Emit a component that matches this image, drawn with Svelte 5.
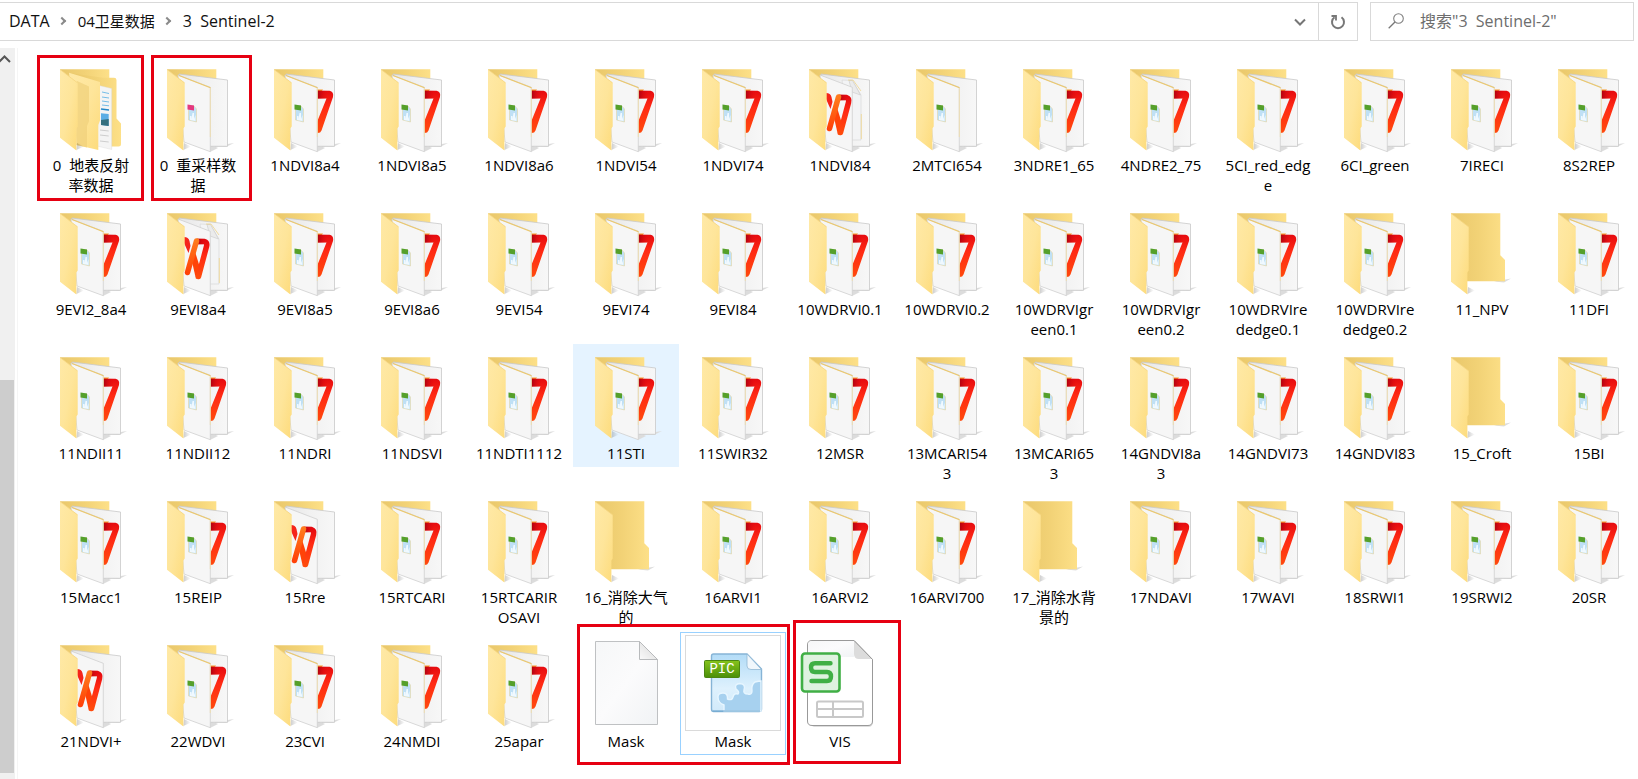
<script>
  // kind: data = green thumbnail with red mark behind, plain = empty folder
  const names = [
    ['0  地表反射\n率数据', 'nested'], ['0  重采样数\n据', 'pink'], '1NDVI8a4', '1NDVI8a5', '1NDVI8a6',
    '1NDVI54', '1NDVI74', ['1NDVI84', 'wdoc'], ['2MTCI654', 'green'], '3NDRE1_65',
    '4NDRE2_75', '5CI_red_edg\ne', '6CI_green', '7IRECI', '8S2REP',
    '9EVI2_8a4', ['9EVI8a4', 'wdoc'], '9EVI8a5', '9EVI8a6', '9EVI54',
    '9EVI74', '9EVI84', '10WDRVI0.1', '10WDRVI0.2', '10WDRVIgr\neen0.1',
    '10WDRVIgr\neen0.2', '10WDRVIre\ndedge0.1', '10WDRVIre\ndedge0.2', ['11_NPV', 'plain'], '11DFI',
    '11NDII11', '11NDII12', '11NDRI', '11NDSVI', '11NDTI1112',
    ['11STI', 'data', 'hover'], '11SWIR32', '12MSR', '13MCARI54\n3', '13MCARI65\n3',
    '14GNDVI8a\n3', '14GNDVI73', '14GNDVI83', ['15_Croft', 'plain'], '15BI',
    '15Macc1', '15REIP', ['15Rre', 'w'], '15RTCARI', '15RTCARIR\nOSAVI',
    ['16_消除大气\n的', 'plain'], '16ARVI1', '16ARVI2', '16ARVI700', ['17_消除水背\n景的', 'plain'],
    '17NDAVI', '17WAVI', '18SRWI1', '19SRWI2', '20SR',
    ['21NDVI+', 'w'], '22WDVI', '23CVI', '24NMDI', '25apar',
    ['Mask', 'blank'], ['Mask', 'pic', 'focus'], ['VIS', 'sheet'],
  ];
  const items = names.map((n) => {
    const [name, kind = 'data', state = ''] = Array.isArray(n) ? n : [n];
    return { name, kind, state };
  });
  const marks = ['m1', 'm2', 'm3', 'm4'];
</script>

<svg class="defs" aria-hidden="true">
  <defs>
    <linearGradient id="flap" x1="0" y1="0" x2="1" y2="1">
      <stop offset="0" stop-color="#ffe9a6" /><stop offset="0.5" stop-color="#fee59a" /><stop offset="1" stop-color="#fddb7b" />
    </linearGradient>
    <linearGradient id="back" x1="0" y1="0" x2="1" y2="0">
      <stop offset="0" stop-color="#e9c76a" /><stop offset="0.5" stop-color="#f2d276" /><stop offset="1" stop-color="#fde088" />
    </linearGradient>
    <linearGradient id="sheetRight" x1="0" y1="0" x2="1" y2="0">
      <stop offset="0" stop-color="#e6e6e6" /><stop offset="0.5" stop-color="#f1f1f1" /><stop offset="1" stop-color="#f7f7f7" />
    </linearGradient>
    <linearGradient id="red" x1="0" y1="0" x2="0" y2="1">
      <stop offset="0" stop-color="#e60b10" /><stop offset="0.4" stop-color="#ff2a14" /><stop offset="1" stop-color="#ff4a0c" />
    </linearGradient>
    <linearGradient id="dark" x1="0" y1="0" x2="1" y2="0">
      <stop offset="0" stop-color="#a80010" /><stop offset="1" stop-color="#e60b10" stop-opacity="0" />
    </linearGradient>
    <linearGradient id="orange" x1="0" y1="0" x2="0" y2="1">
      <stop offset="0" stop-color="#ff7a1c" /><stop offset="1" stop-color="#ff4208" />
    </linearGradient>
    <linearGradient id="shade" x1="0" y1="0" x2="1" y2="0">
      <stop offset="0" stop-color="#000" stop-opacity="0.2" /><stop offset="1" stop-color="#000" stop-opacity="0" />
    </linearGradient>
    <linearGradient id="page" x1="0" y1="0" x2="1" y2="1">
      <stop offset="0" stop-color="#f6f7f8" /><stop offset="0.5" stop-color="#fbfbfc" /><stop offset="1" stop-color="#f1f3f5" />
    </linearGradient>
    <linearGradient id="sky" x1="0" y1="0" x2="0" y2="1">
      <stop offset="0" stop-color="#b3dcf7" /><stop offset="0.6" stop-color="#def1fd" /><stop offset="1" stop-color="#d2eafa" />
    </linearGradient>
    <linearGradient id="leaf" x1="0" y1="0" x2="0" y2="1">
      <stop offset="0" stop-color="#86c41c" /><stop offset="1" stop-color="#4b8f08" />
    </linearGradient>
    <linearGradient id="fold" x1="0" y1="1" x2="1" y2="0">
      <stop offset="0" stop-color="#fafafa" /><stop offset="1" stop-color="#d6d6d6" />
    </linearGradient>
  </defs>
</svg>

{#snippet flap()}
  <path d="M33.4 91 41 87.500 34 84z" fill="url(#shade)" />
  <path d="M17 10.300 34.700 23.700V67.500L33.400 69.500V91.500L17 78.700z" fill="url(#flap)" />
  <path d="M17 10.500 34.500 23.800" stroke="#f3d27c" stroke-width=".7" fill="none" />
{/snippet}

{#snippet icon(kind)}
  <svg class="icon" viewBox="0 0 96 96" aria-hidden="true">
    {#if kind === 'plain'}
      <path d="M60 78.500 77 75.500 70 79.500z" fill="#ddd" />
      <path d="M17 10.300H66.300V52.300L71 57V78.300H30z" fill="url(#back)" />
      {@render flap()}
    {:else if kind === 'nested'}
      <path d="M17 10.300H66.300V40H30z" fill="url(#back)" />
      <path d="M27 14 60 18.700H71Q73.500 18.700 73.500 21V59.500L78 64.500V85Q78 87.500 75.500 87.500H60z" fill="url(#back)" />
      <path d="M56 26.500 68.700 29.500V90.500L54 87z" fill="#f4f4f4" stroke="#d8d8d8" stroke-width=".4" />
      <path d="M59 33 66 34.500M59 38 66 39M59 42 66 43M59 46 66 46.800" stroke="#54afe4" stroke-width=".8" />
      <path d="M58 50 66 51" stroke="#2187c8" stroke-width="1.300" />
      <path d="M58 54.300 65.700 55V67L58 66z" fill="#5caee5" /><path d="M58 61 65.700 60V67L58 66z" fill="#35707f" />
      <path d="M57 71 65.700 72M57 76 65.700 77M57 82 65.700 83" stroke="#bbb" stroke-width=".7" />
      <path d="M26 13.700 57 23V61.500L55.300 66V91L34 86z" fill="url(#flap)" />
      <path d="M34 22 46 27.500V62L44 67V88.500L33 86z" fill="#f0d07a" opacity=".7" />
      {@render flap()}
    {:else if kind === 'blank'}
      <path d="M17.500 6.500H61.500L79.500 24.500V89.500H17.500z" fill="url(#page)" stroke="#bfc1c3" />
      <path d="M61.500 6.500V24.500H79.500z" fill="url(#fold)" stroke="#b8babc" />
    {:else if kind === 'pic'}
      <rect x=".5" y=".5" width="95" height="95" fill="#fff" stroke="#dadada" />
      <path d="M28.500 19H62L76.500 34V74Q76.500 76.500 74 76.500H28.500Q26.500 76.500 26.500 74V21Q26.500 19 28.500 19z" fill="url(#sky)" stroke="#86b4d6" stroke-width="1.400" />
      <path d="M39 76V70Q33 68 33 62Q33 58 38 58Q43 58 42.500 64Q47 66 48 62Q49 58 53 59Q55 57 51 54Q49 49 55 48.500Q61 49 59 55Q58 59 63 59Q67 60 67 56Q66 50 70 47Q74 46 76 46V76z" fill="#a7d1ef" stroke="#e7f6ff" stroke-width="1.400" />
      <path d="M62 19V31Q62 34.500 66 34.500H76.500z" fill="#f0f7fc" stroke="#91b8d4" stroke-width=".8" />
      <path d="M28 76H75" stroke="#6aa5cf" />
      <rect x="19.500" y="25.500" width="35" height="17" rx="1" fill="url(#leaf)" stroke="#4b8611" />
      <text class="pic" x="37" y="38" text-anchor="middle">PIC</text>
    {:else if kind === 'sheet'}
      <path d="M20 92H76Q81 92 81 87V60Z" fill="#ddd" />
      <path d="M20 5.500H62L80.500 24.500V86Q80.500 90.500 76 90.500H20Q15.500 90.500 15.500 86V10Q15.500 5.500 20 5.500z" fill="#fff" stroke="#999" />
      <path d="M16 22V10Q16 6 20 6H62V22z" fill="url(#page)" />
      <path d="M62 5.500V19Q62 24 67 24H80.500z" fill="#dcdcdc" /><path d="M62 5.500 80.500 24.500" stroke="#999" />
      <rect x="10" y="18.500" width="37.500" height="38" rx="3" fill="#dff2e0" stroke="#40af45" stroke-width="2.600" />
      <path d="M38.500 28.300H23Q19 28.300 19 32.500Q19 37 23 37H35Q39 37 39 41.500Q39 46 35 46H19.500" fill="none" stroke="#40af45" stroke-width="4.400" stroke-linecap="round" />
      <g fill="none" stroke="#c8c8c8" stroke-width="2"><rect x="25" y="66.500" width="46" height="15.500" rx="1.500" /><path d="M25 74H71M41 66.500V82" /></g>
    {:else}
      <path d="M62 87.500 84 84 76 88zM60 93 68 89 60 85z" fill="#dcdcdc" />
      <path d="M17 10.300H66.300V40H30z" fill="url(#back)" />
      <path d="M29 15 77.500 21V87.300H58z" fill="url(#sheetRight)" stroke="#c9c9c9" stroke-width=".8" />
      {#if kind === 'data'}
        <path d="M60 30.500H66L60 38z" fill="#f79a2b" />
        <path d="M60 31.700H72.500Q77 32.500 76 38L64.500 71.500Q63.500 74.300 60 74V63L69.500 39.500H60z" fill="url(#red)" />
        <path d="M60 31.700H71L69.500 39.500H60z" fill="url(#dark)" />
      {/if}
      {#if kind === 'wdoc'}
        <path d="M50 21 60 21.500 69 36V81H58z" fill="#f3f4f5" stroke="#d5d5d5" stroke-width=".6" />
        <path d="M57 21.500H60.500L68.500 36 60 33z" fill="#ebebeb" stroke="#c9c9c9" stroke-width=".6" />
        <path d="M56 21H61L69 32M69.300 55V80" stroke="#efd48b" stroke-width=".8" fill="none" />
      {/if}
      <path d="M28 16 60.300 28.300V92.700L34 83z" fill="#f6f6f6" stroke="#cfcfcf" stroke-width=".8" />
      {#if kind === 'w' || kind === 'wdoc'}
        <path d="M34 34Q38.500 34 39.500 38L40.500 43L38.500 50L34 40z" fill="#f5241a" />
        <path d="M45 48.500 49.500 63 50.500 73 46 76 42.300 60z" fill="#ff4308" />
        <path d="M48 38.500H54.500Q57.500 39.500 56.500 43.500L48.500 73.500" fill="none" stroke="url(#red)" stroke-width="5.500" stroke-linecap="round" stroke-linejoin="round" />
        <path d="M47 35.700H56L54.500 41.300H47z" fill="url(#dark)" />
        <path d="M46.500 38 37.500 69.500" stroke="url(#orange)" stroke-width="5.500" stroke-linecap="round" />
      {:else}
        <path d="M29 16.500 60.500 28.800" stroke="#ecc86c" stroke-width="1.200" fill="none" />
        <path d="M60.300 29V78" stroke="#f1dda6" stroke-width=".8" />
        <path d="M38.500 47 43.500 46.500 46.500 50V63L38.500 61z" fill="#bfe0f5" stroke="#e6d7a5" stroke-width=".6" />
        <path d="M40 61V57H41.500V60L42.500 54H44V60L45.500 56V62z" fill="#f0f9ff" />
        <path d="M37.500 45.500 44 46.500V51.500L37.500 50.500z" fill={kind === 'pink' ? '#e4397f' : '#55a02b'} />
      {/if}
      {@render flap()}
    {/if}
  </svg>
{/snippet}

<div class="window">
  <header>
    <nav class="address" aria-label="Address">
      <ol>
        <li><a href="#data">DATA</a></li>
        <li><a class="cjk" href="#sat">04卫星数据</a></li>
        <li><a href="#sentinel">3  Sentinel-2</a></li>
      </ol>
      <button class="history" aria-label="Previous locations">
        <svg width="12" height="8" viewBox="0 0 12 8"><path d="M1 1.500 6 6.500 11 1.500" fill="none" stroke="#767676" stroke-width="2" /></svg>
      </button>
      <button class="refresh" aria-label="Refresh">
        <svg width="16" height="16" viewBox="0 0 16 16"><path d="M11.500 3.300A6 6 0 1 1 4.500 3.300" fill="none" stroke="#777" stroke-width="2" /><path d="M1.500 2H6V6.500" fill="none" stroke="#777" stroke-width="1.800" /></svg>
      </button>
    </nav>
    <label class="search">
      <svg width="16" height="16" viewBox="0 0 16 16"><circle cx="10.500" cy="5.500" r="4.800" fill="none" stroke="#808080" stroke-width="1.100" /><path d="M7 9 .7 15.300" stroke="#777" stroke-width="1.300" /></svg>
      <input type="text" aria-label="Search" placeholder={'搜索"3  Sentinel-2"'} />
    </label>
  </header>

  <div class="body">
    <div class="scroll">
      <svg width="14" height="8" viewBox="0 0 14 8"><path d="M-1 7 4.500 1.500 10 7" fill="none" stroke="#555" stroke-width="2" /></svg>
      <div class="thumb"></div>
    </div>
    <main>
      <ul>
        {#each items as it}
          <li class="cell {it.state}">
            {@render icon(it.kind)}
            <span>{it.name}</span>
          </li>
        {/each}
      </ul>
      {#each marks as m}<div class="mark {m}"></div>{/each}
    </main>
  </div>
</div>

<style>
  :global(body) { background: #fff; overflow: hidden; }
  .defs { position: absolute; width: 0; height: 0; }
  .window {
    display: flex; flex-direction: column; min-height: 100vh; box-sizing: border-box; padding-top: 2px;
    font: 15px/20px "Open Sans", "Noto Sans CJK SC", sans-serif; color: #000;
  }
  ol, ul { list-style: none; margin: 0; padding: 0; }
  header { display: flex; gap: 12px; padding-right: 4px; font-size: 16px; }
  .address { flex: 1; display: flex; height: 39px; box-sizing: border-box; border: 1px solid #d9d9d9; border-left: 0; }
  ol { flex: 1; display: flex; align-items: center; padding: 0 0 1px 9px; }
  ol li { display: flex; align-items: center; white-space: pre; }
  ol li + li::before {
    content: ""; width: 4px; height: 4px; margin: 0 13px 0 9px;
    border: solid #8a8a8a; border-width: 2px 2px 0 0; transform: rotate(45deg);
  }
  a { color: #111; text-decoration: none; }
  .cjk { font-size: 15px; }
  button { border: 0; background: none; padding: 0; display: grid; place-items: center; }
  .history { width: 36px; }
  .refresh { width: 39px; border-left: 1px solid #d9d9d9; }
  .search { width: 264px; box-sizing: border-box; display: flex; align-items: center; gap: 16px; padding: 0 16px 1px 17px; border: 1px solid #d9d9d9; }
  .search svg { flex: none; }
  input { flex: 1; min-width: 0; border: 0; padding: 0; outline: 0; font: inherit; white-space: pre; background: none; }
  input::placeholder { color: #6d6d6d; opacity: 1; }
  .body { flex: 1; display: flex; margin-top: 7px; }
  .scroll { width: 15px; flex: none; display: flex; flex-direction: column; background: #f0f0f0; padding: 7px 0 6px; box-sizing: border-box; }
  .thumb { width: 14px; height: 393px; margin-top: auto; background: #cdcdcd; }
  main { flex: 1; min-width: 0; position: relative; overflow: hidden; border-left: 1px solid #f5f5f5; margin-left: 2px; padding: 8px 0 0 20px; }
  ul { display: grid; grid-template-columns: repeat(auto-fill, 106px); grid-auto-rows: minmax(143px, auto); gap: 1px; margin-right: -8px; }
  .cell { align-self: start; box-sizing: border-box; padding: 3px 0 4px; display: flex; flex-direction: column; align-items: center; text-align: center; white-space: pre; }
  .cell.hover { background: #e5f3ff; }
  .cell.focus { outline: 1px solid #99d1ff; outline-offset: -1px; }
  .icon { width: 96px; height: 96px; display: block; }
  .pic { font: 14px "Liberation Mono", monospace; fill: #fff; }
  .mark { position: absolute; border: 3px solid #e60012; box-sizing: border-box; pointer-events: none; }
  .m1 { left: 19px; top: 7px; width: 107px; height: 146px; }
  .m2 { left: 133px; top: 7px; width: 101px; height: 146px; }
  .m3 { left: 559px; top: 576px; width: 213px; height: 141px; }
  .m4 { left: 775px; top: 572px; width: 108px; height: 144px; }
</style>
